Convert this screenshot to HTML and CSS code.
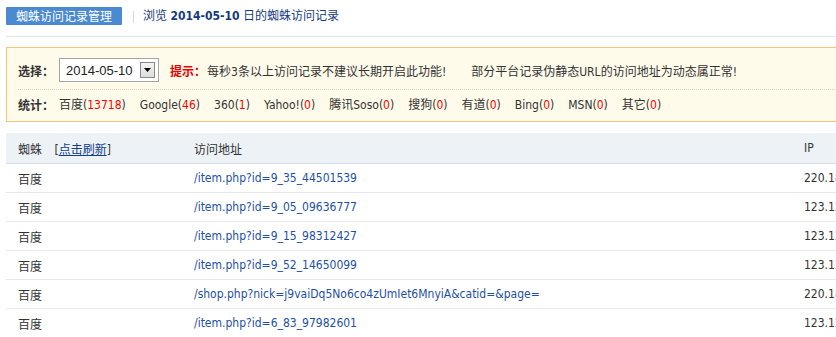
FILE: index.html
```html
<!DOCTYPE html>
<html lang="zh-CN">
<head>
<meta charset="utf-8">
<title>蜘蛛访问记录管理</title>
<link rel="stylesheet" href="styles.css">
</head>
<body>
<div class="page">
  <div class="topbar">
    <span class="tab">蜘蛛访问记录管理</span>
    <span class="sep"></span>
    <span class="title">浏览 <b>2014-05-10</b> 日的蜘蛛访问记录</span>
  </div>

  <div class="notice">
    <div class="row row-select">
      <span class="label">选择：</span>
      <span class="select">
        <span class="select-text">2014-05-10</span>
        <span class="select-btn"><svg width="7" height="4" viewBox="0 0 7 4"><path d="M0 0H7L3.5 4Z" fill="#000"/></svg></span>
      </span>
      <span class="tip">提示：</span>
      <span class="msg">每秒3条以上访问记录不建议长期开启此功能!</span>
      <span class="msg msg2">部分平台记录伪静态URL的访问地址为动态属正常!</span>
    </div>
    <div class="row row-stats">
      <span class="label">统计：</span>
      <span class="stat">百度(<em>13718</em>)</span>
      <span class="stat">Google(<em>46</em>)</span>
      <span class="stat">360(<em>1</em>)</span>
      <span class="stat">Yahoo!(<em>0</em>)</span>
      <span class="stat">腾讯Soso(<em>0</em>)</span>
      <span class="stat">搜狗(<em>0</em>)</span>
      <span class="stat">有道(<em>0</em>)</span>
      <span class="stat">Bing(<em>0</em>)</span>
      <span class="stat">MSN(<em>0</em>)</span>
      <span class="stat">其它(<em>0</em>)</span>
    </div>
  </div>

  <table class="log">
    <thead>
      <tr>
        <th class="c1">蜘蛛 <span class="refresh">[<a href="#">点击刷新</a>]</span></th>
        <th class="c2">访问地址</th>
        <th class="c3">IP</th>
      </tr>
    </thead>
    <tbody>
      <tr><td>百度</td><td><a href="#">/item.php?id=9_35_44501539</a></td><td>220.181.108.91</td></tr>
      <tr><td>百度</td><td><a href="#">/item.php?id=9_05_09636777</a></td><td>123.125.71.38</td></tr>
      <tr><td>百度</td><td><a href="#">/item.php?id=9_15_98312427</a></td><td>123.125.71.74</td></tr>
      <tr><td>百度</td><td><a href="#">/item.php?id=9_52_14650099</a></td><td>123.125.71.12</td></tr>
      <tr><td>百度</td><td><a href="#">/shop.php?nick=j9vaiDq5No6co4zUmIet6MnyiA&amp;catid=&amp;page=</a></td><td>220.181.108.84</td></tr>
      <tr><td>百度</td><td><a href="#">/item.php?id=6_83_97982601</a></td><td>123.125.71.56</td></tr>
    </tbody>
  </table>
</div>
</body>
</html>
```

FILE: styles.css
```css
html, body {
  margin: 0;
  padding: 0;
  overflow: hidden;
  background: #fff;
}
body {
  font-family: "DejaVu Sans Condensed", "Noto Sans CJK SC", sans-serif;
  font-size: 12px;
  color: #333;
}
.page {
  width: 1000px;
  padding: 7px 0 0 6px;
}
.topbar {
  display: flex;
  height: 29px;
  align-items: flex-start;
  border-bottom: 1px solid #e6e6e6;
}
.tab {
  display: inline-block;
  height: 18px;
  line-height: 18px;
  padding: 0 10px;
  background: #4a8ad0;
  color: #fff;
  border-radius: 1px;
  font-family: "Noto Sans CJK SC", sans-serif;
}
.sep {
  width: 1px;
  height: 12px;
  background: #dcd2da;
  margin: 4px 9px 0 11px;
}
.title {
  line-height: 18px;
  color: #163a82;
}
.title b {
  font-weight: bold;
}
.notice {
  margin-top: 10px;
  border: 1px solid #fcc47a;
  background: #fffbea;
  padding: 0 12px 0 11px;
}
.row {
  display: flex;
  align-items: center;
}
.row-select {
  padding: 10px 0 7px;
}
.row-stats {
  border-top: 1px dotted #d8d2c0;
  padding: 5px 0 6px;
  line-height: 20px;
}
.label {
  font-weight: bold;
  font-family: "Noto Sans CJK SC", sans-serif;
  width: 41px;
}
.select {
  display: flex;
  align-items: center;
  width: 98px;
  height: 22px;
  border: 1px solid #a5a5a5;
  background: #fff;
}
.select-text {
  flex: 1;
  font-family: "Liberation Sans", sans-serif;
  font-size: 13px;
  color: #222;
  padding-left: 6px;
}
.select-btn {
  width: 15px;
  height: 16px;
  margin-right: 3px;
  border: 1px solid #888;
  background: linear-gradient(#f4f4f4, #dcdcdc);
  display: flex;
  align-items: center;
  justify-content: center;
  box-sizing: border-box;
}
.tip {
  color: #e00;
  font-weight: bold;
  font-family: "Noto Sans CJK SC", sans-serif;
  margin-left: 11px;
}
.msg {
  margin-left: 1px;
}
.msg2 {
  margin-left: 25px;
}
.stat {
  margin-right: 14px;
}
.stat em {
  font-style: normal;
  color: #f00;
}
.log {
  margin-top: 11px;
  width: 990px;
  border-collapse: collapse;
}
.log th, .log td {
  text-align: left;
  font-weight: normal;
  padding: 0 0 0 12px;
  white-space: nowrap;
}
.log th {
  height: 30px;
  background: #edf2f7;
  border-bottom: 1px solid #d4dee9;
}
.log td {
  height: 28px;
  border-bottom: 1px solid #e8e8e8;
}
.c1 { width: 164px; }
.c2 { width: 598px; }
.refresh {
  margin-left: 9px;
}
.refresh a {
  color: #123f8a;
  text-decoration: underline;
}
.log td a {
  color: #1e50a6;
  text-decoration: none;
}
```
